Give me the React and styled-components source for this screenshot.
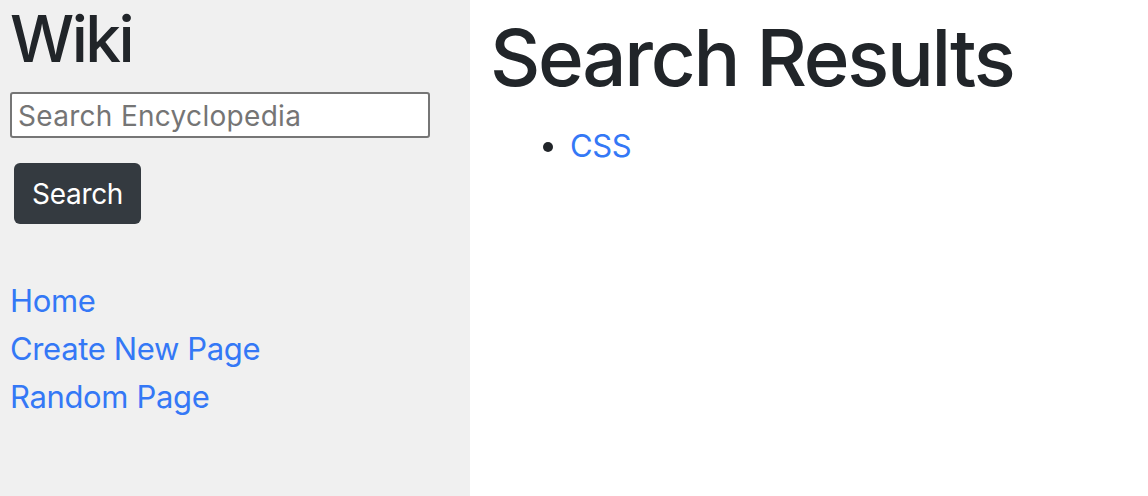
import styled, { createGlobalStyle } from "styled-components";

const GlobalStyle = createGlobalStyle`
  html, body {
    margin: 0;
    padding: 0;
    background: #ffffff;
    font-family: Inter, "Noto Sans", sans-serif;
    color: #212529;
  }
  * {
    box-sizing: border-box;
  }
`;

const Page = styled.div`
  display: flex;
  min-height: 496px;
`;

const Sidebar = styled.aside`
  width: 470px;
  flex-shrink: 0;
  background: #f0f0f0;
  padding: 0 10px;
  display: flex;
  flex-direction: column;
`;

const Brand = styled.h2`
  margin: 0 0 15px;
  font-size: 64px;
  font-weight: 500;
  line-height: 77px;
  letter-spacing: -2.5px;
`;

const SearchForm = styled.form`
  display: flex;
  flex-direction: column;
  align-items: flex-start;
  gap: 25px;
`;

const SearchInput = styled.input`
  width: 420px;
  height: 46px;
  border: 2px solid #767676;
  border-radius: 3px;
  background: #ffffff;
  padding: 2px 6px 0;
  font-family: Inter, "Noto Sans", sans-serif;
  font-size: 28px;
  letter-spacing: 0.3px;
  color: #212529;
  &::placeholder {
    color: #757575;
  }
`;

const Button = styled.button`
  margin-left: 4px;
  height: 61px;
  padding: 0 18px;
  border: 0;
  border-radius: 6px;
  background: #343a40;
  color: #ffffff;
  font-family: Inter, "Noto Sans", sans-serif;
  font-size: 28px;
  letter-spacing: -0.3px;
  line-height: 1;
`;

const Nav = styled.nav`
  margin-top: 53px;
  display: flex;
  flex-direction: column;
`;

const Link = styled.a`
  color: #3478f6;
  text-decoration: none;
  font-size: 31px;
  line-height: 48px;
  letter-spacing: -0.35px;
`;

const Main = styled.main`
  flex: 1;
  padding: 10px 20px;
`;

const Title = styled.h1`
  margin: 0 0 16px;
  font-size: 78px;
  font-weight: 500;
  line-height: 96px;
  letter-spacing: -2.3px;
`;

const Results = styled.ul`
  margin: 0;
  padding-left: 80px;
  font-size: 31px;
  line-height: 48px;
`;

const pages = ["Home", "Create New Page", "Random Page"];

export default function App() {
  return (
    <>
      <GlobalStyle />
      <Page>
        <Sidebar>
          <Brand>Wiki</Brand>
          <SearchForm onSubmit={(e) => e.preventDefault()}>
            <SearchInput type="text" placeholder="Search Encyclopedia" />
            <Button type="submit">Search</Button>
          </SearchForm>
          <Nav>
            {pages.map((p) => (
              <Link href="#" key={p}>
                {p}
              </Link>
            ))}
          </Nav>
        </Sidebar>
        <Main>
          <Title>Search Results</Title>
          <Results>
            <li>
              <Link href="#">CSS</Link>
            </li>
          </Results>
        </Main>
      </Page>
    </>
  );
}
